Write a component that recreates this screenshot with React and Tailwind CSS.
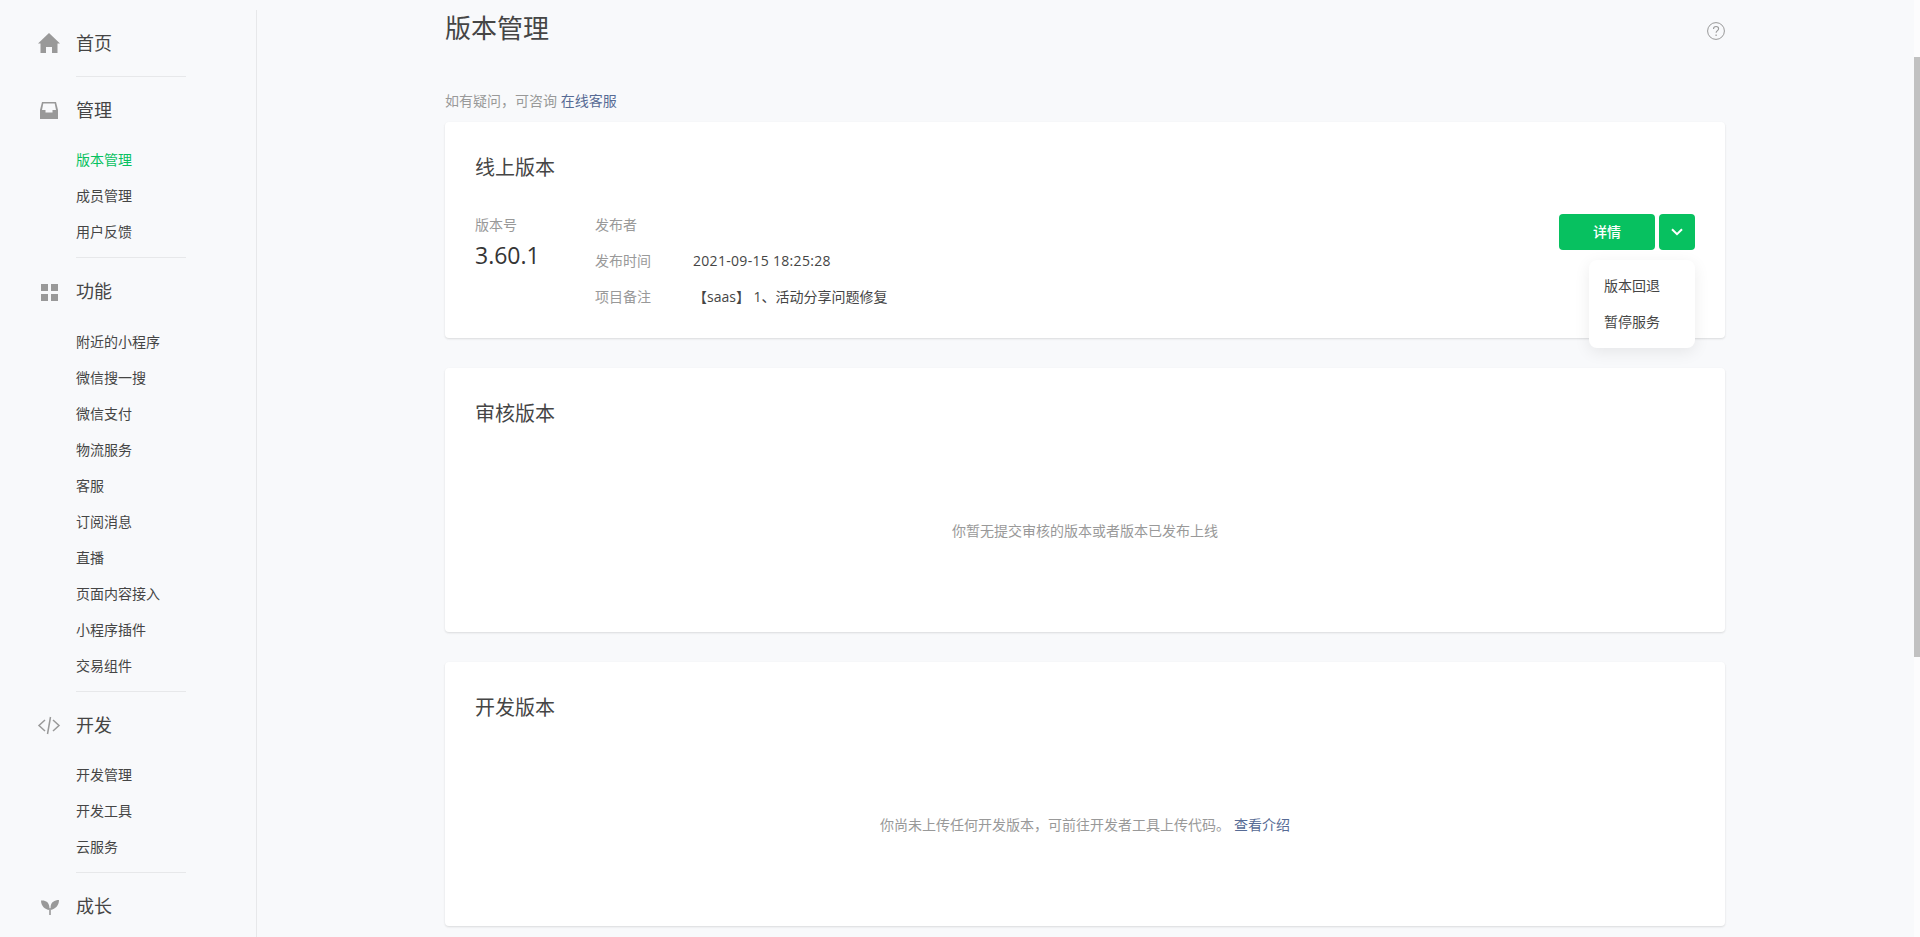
const groups = [
  { title: '首页', icon: <HomeIcon />, items: [] },
  { title: '管理', icon: <InboxIcon />, items: ['版本管理', '成员管理', '用户反馈'], headPad: 'pb-[13px]' },
  {
    title: '功能',
    icon: <GridIcon />,
    items: ['附近的小程序', '微信搜一搜', '微信支付', '物流服务', '客服', '订阅消息', '直播', '页面内容接入', '小程序插件', '交易组件'],
    headPad: 'pb-[14px]',
  },
  { title: '开发', icon: <CodeIcon />, items: ['开发管理', '开发工具', '云服务'], headPad: 'pb-[13px]' },
  { title: '成长', icon: <SproutIcon />, items: [] },
]

function HomeIcon() {
  return (
    <svg width="24" height="24" viewBox="0 0 24 24" fill="#999">
      <path d="M12 2 23 12.500h-2.500V22H15v-6H9v6H3.500v-9.500H1z" />
    </svg>
  )
}

function InboxIcon() {
  return (
    <svg width="24" height="24" viewBox="0 0 24 24" fill="#999">
      <path fillRule="evenodd" d="M5 4h14l2 8v9H3v-9zM6.300 5.500 5 12h3.500v2.500h7V12H19l-1.300-6.500z" />
    </svg>
  )
}

function GridIcon() {
  return (
    <svg width="24" height="24" viewBox="0 0 24 24" fill="#999">
      <rect x="4" y="5" width="7" height="7" />
      <rect x="14" y="5" width="7" height="7" />
      <rect x="4" y="15" width="7" height="7" />
      <rect x="14" y="15" width="7" height="7" />
    </svg>
  )
}

function CodeIcon() {
  return (
    <svg width="24" height="24" viewBox="0 0 24 24" fill="none" stroke="#999" strokeWidth="1.500">
      <path d="M8 7 2 12.500 8 18M16 7l6 5.500L16 18M13.500 4l-3 17" />
    </svg>
  )
}

function SproutIcon() {
  return (
    <svg width="24" height="24" viewBox="0 0 24 24" fill="#999">
      <path d="M4 6.500C8.500 6 12 8 12.400 13v3C8 15.500 4 12 4 6.500zM22 6c-4.500 0-8 2-8.400 7v3C18.500 15 22 11.500 22 6z" />
      <rect x="12.200" y="14" width="1.600" height="7" />
    </svg>
  )
}

function Sidebar() {
  return (
    <aside className="mt-[10px] w-[257px] shrink-0 border-r border-[#e7e8ea]">
      {groups.map((group, i) => (
        <div key={group.title}>
          {i > 0 && <div className="ml-[76px] h-px w-[110px] bg-[#e7e8ea]" />}
          <div className={`pt-[15px] ${group.headPad || 'pb-[15px]'}`}>
            <div className="flex h-[36px] items-center text-[18px] text-[#454545]">
              <span className="ml-[37px] mr-[15px] flex">{group.icon}</span>
              {group.title}
            </div>
          </div>
          {group.items.length > 0 && (
            <ul className="pb-[8px]">
              {group.items.map((item) => (
                <li
                  key={item}
                  className={`flex h-[36px] items-center pl-[76px] text-[14px] ${item === '版本管理' ? 'text-[#07c160]' : 'text-[#454545]'}`}
                >
                  {item}
                </li>
              ))}
            </ul>
          )}
        </div>
      ))}
    </aside>
  )
}

function Card({ title, children, className }) {
  return (
    <section className={`mb-[30px] rounded-[4px] bg-white px-[30px] shadow-[0_1px_2px_rgba(150,150,150,0.3)] ${className}`}>
      <h2 className="pt-[31px] text-[20px] leading-[30px] text-[#454545]">{title}</h2>
      {children}
    </section>
  )
}

function InfoRow({ label, children }) {
  return (
    <div className="flex h-[36px] items-center">
      <span className="w-[98px] text-[#999]">{label}</span>
      <span className="text-[#454545]">{children}</span>
    </div>
  )
}

function OnlineCard() {
  return (
    <Card title="线上版本" className="h-[216px]">
      <div className="mt-[23px] flex text-[14px]">
        <div className="w-[120px]">
          <div className="flex h-[37px] items-center pb-[1px] text-[#999]">版本号</div>
          <div className="text-[23px] leading-[24px] text-[#353535]">3.60.1</div>
        </div>
        <div className="flex-1">
          <InfoRow label="发布者" />
          <InfoRow label="发布时间"><span className="tracking-[0.3px]">2021-09-15 18:25:28</span></InfoRow>
          <InfoRow label="项目备注">【saas】 1、活动分享问题修复</InfoRow>
        </div>
        <div className="relative mt-[8px] flex h-[36px] gap-[4px]">
          <button className="h-[36px] w-[96px] rounded-[4px] bg-[#07c160] pb-[2px] text-[14px] font-medium text-white">详情</button>
          <button className="flex h-[36px] w-[36px] items-center justify-center rounded-[4px] bg-[#07c160]">
            <svg width="12" height="8" viewBox="0 0 12 8" fill="none" stroke="#fff" strokeWidth="2">
              <path d="M1 1.200 6 6.200l5-5" />
            </svg>
          </button>
          <div className="absolute right-0 top-[46px] w-[106px] rounded-[8px] bg-white pb-[9px] pt-[7px] shadow-[0_4px_16px_rgba(0,0,0,0.08)]">
            <div className="flex h-[36px] items-center pl-[15px] text-[#454545]">版本回退</div>
            <div className="flex h-[36px] items-center pl-[15px] text-[#454545]">暂停服务</div>
          </div>
        </div>
      </div>
    </Card>
  )
}

function EmptyCard({ title, children }) {
  return (
    <Card title={title} className="flex h-[264px] flex-col">
      <div className="flex flex-1 items-center justify-center text-[14px] text-[#999]">{children}</div>
    </Card>
  )
}

export default function App() {
  return (
    <div className="flex h-[937px] overflow-hidden bg-[#f8f9fb] font-['Open_Sans','Noto_Sans_CJK_SC',sans-serif] text-[#454545]">
      <Sidebar />
      <main className="ml-[188px] w-[1280px] shrink-0">
        <div className="flex h-[46px] items-center justify-between pt-[10px]">
          <h1 className="text-[26px] leading-[36px] text-[#454545]">版本管理</h1>
          <svg width="18" height="18" viewBox="0 0 18 18" fill="none" stroke="#999" className="mt-[5px]">
            <circle cx="9" cy="9" r="8.400" />
            <path d="M6.500 7c0-1.500 1.100-2.500 2.600-2.500s2.500 1 2.500 2.300c0 1.800-2.500 1.900-2.500 4" strokeWidth="1.100" />
            <path d="M9.100 12.500v1.500" strokeWidth="1.200" />
          </svg>
        </div>
        <p className="mt-[44px] mb-[10px] text-[14px] leading-[22px] text-[#999]">
          如有疑问，可咨询 <span className="text-[#576b95]">在线客服</span>
        </p>
        <OnlineCard />
        <EmptyCard title="审核版本">你暂无提交审核的版本或者版本已发布上线</EmptyCard>
        <EmptyCard title="开发版本">
          你尚未上传任何开发版本，可前往开发者工具上传代码。
          <span className="ml-[4px] text-[#576b95]">查看介绍</span>
        </EmptyCard>
      </main>
      <div className="ml-auto h-full w-[6px] shrink-0 bg-[#fcfcfd] pt-[57px]">
        <div className="h-[600px] bg-[#c1c1c1]" />
      </div>
    </div>
  )
}
